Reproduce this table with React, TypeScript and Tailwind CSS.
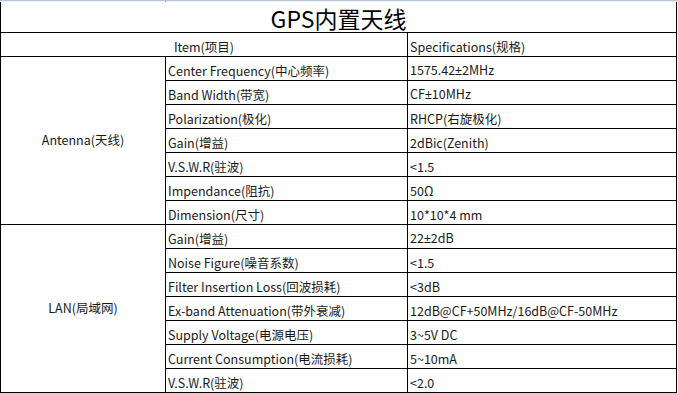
const font = { fontFamily: '"Noto Sans CJK SC", "Liberation Sans", sans-serif' };

type Row = { item: string; spec: string };

const groups: { name: string; rows: Row[] }[] = [
  {
    name: "Antenna(天线)",
    rows: [
      { item: "Center Frequency(中心频率)", spec: "1575.42±2MHz" },
      { item: "Band Width(带宽)", spec: "CF±10MHz" },
      { item: "Polarization(极化)", spec: "RHCP(右旋极化)" },
      { item: "Gain(增益)", spec: "2dBic(Zenith)" },
      { item: "V.S.W.R(驻波)", spec: "<1.5" },
      { item: "Impendance(阻抗)", spec: "50Ω" },
      { item: "Dimension(尺寸)", spec: "10*10*4 mm" },
    ],
  },
  {
    name: "LAN(局域网)",
    rows: [
      { item: "Gain(增益)", spec: "22±2dB" },
      { item: "Noise Figure(噪音系数)", spec: "<1.5" },
      { item: "Filter Insertion Loss(回波损耗)", spec: "<3dB" },
      { item: "Ex-band Attenuation(带外衰减)", spec: "12dB@CF+50MHz/16dB@CF-50MHz" },
      { item: "Supply Voltage(电源电压)", spec: "3~5V DC" },
      { item: "Current Consumption(电流损耗)", spec: "5~10mA" },
      { item: "V.S.W.R(驻波)", spec: "<2.0" },
    ],
  },
];

const cell = "border border-black px-[2px] pb-[1px] align-bottom text-[12.5px] leading-[16px] text-[#1a1a1a] whitespace-nowrap";

// the CJK font draws ± full width, so take it from a Latin face
function Spec({ text }: { text: string }) {
  const parts = text.split("±");
  return (
    <>
      {parts.map((p, i) => (
        <span key={i}>
          {i > 0 && <span className="font-['Liberation_Sans']">±</span>}
          {p}
        </span>
      ))}
    </>
  );
}

export default function App() {
  return (
    <div className="w-[678px] h-[393px] bg-white overflow-hidden" style={font}>
      {/* sheet strip */}
      <div className="relative h-[2px] border-t border-[#b4c3d6] bg-[#eef2f7]">
        <div className="absolute left-[165px] top-0 h-[1px] w-[1px] bg-[#8a9ab0]" />
      </div>
      <table className="w-[676px] table-fixed border-collapse">
        <colgroup>
          <col className="w-[165px]" />
          <col className="w-[242px]" />
          <col className="w-[269px]" />
        </colgroup>
        <tbody>
          <tr className="h-[30px]">
            <td colSpan={3} className="border-x border-b border-black text-center align-bottom text-[23px] leading-[28px] text-black">
              GPS内置天线
            </td>
          </tr>
          <tr className="h-[24px]">
            <td colSpan={2} className={cell + " text-center"}>
              Item(项目)
            </td>
            <td className={cell}>Specifications(规格)</td>
          </tr>
          {groups.map((g) =>
            g.rows.map((r, i) => (
              <tr key={g.name + i} className="h-[24px]">
                {i === 0 && (
                  <td rowSpan={g.rows.length} className="border border-black text-center align-middle text-[12.5px] leading-[16px] text-[#1a1a1a]">
                    {g.name}
                  </td>
                )}
                <td className={cell}>{r.item}</td>
                <td className={cell}>
                  <Spec text={r.spec} />
                </td>
              </tr>
            ))
          )}
        </tbody>
      </table>
    </div>
  );
}
